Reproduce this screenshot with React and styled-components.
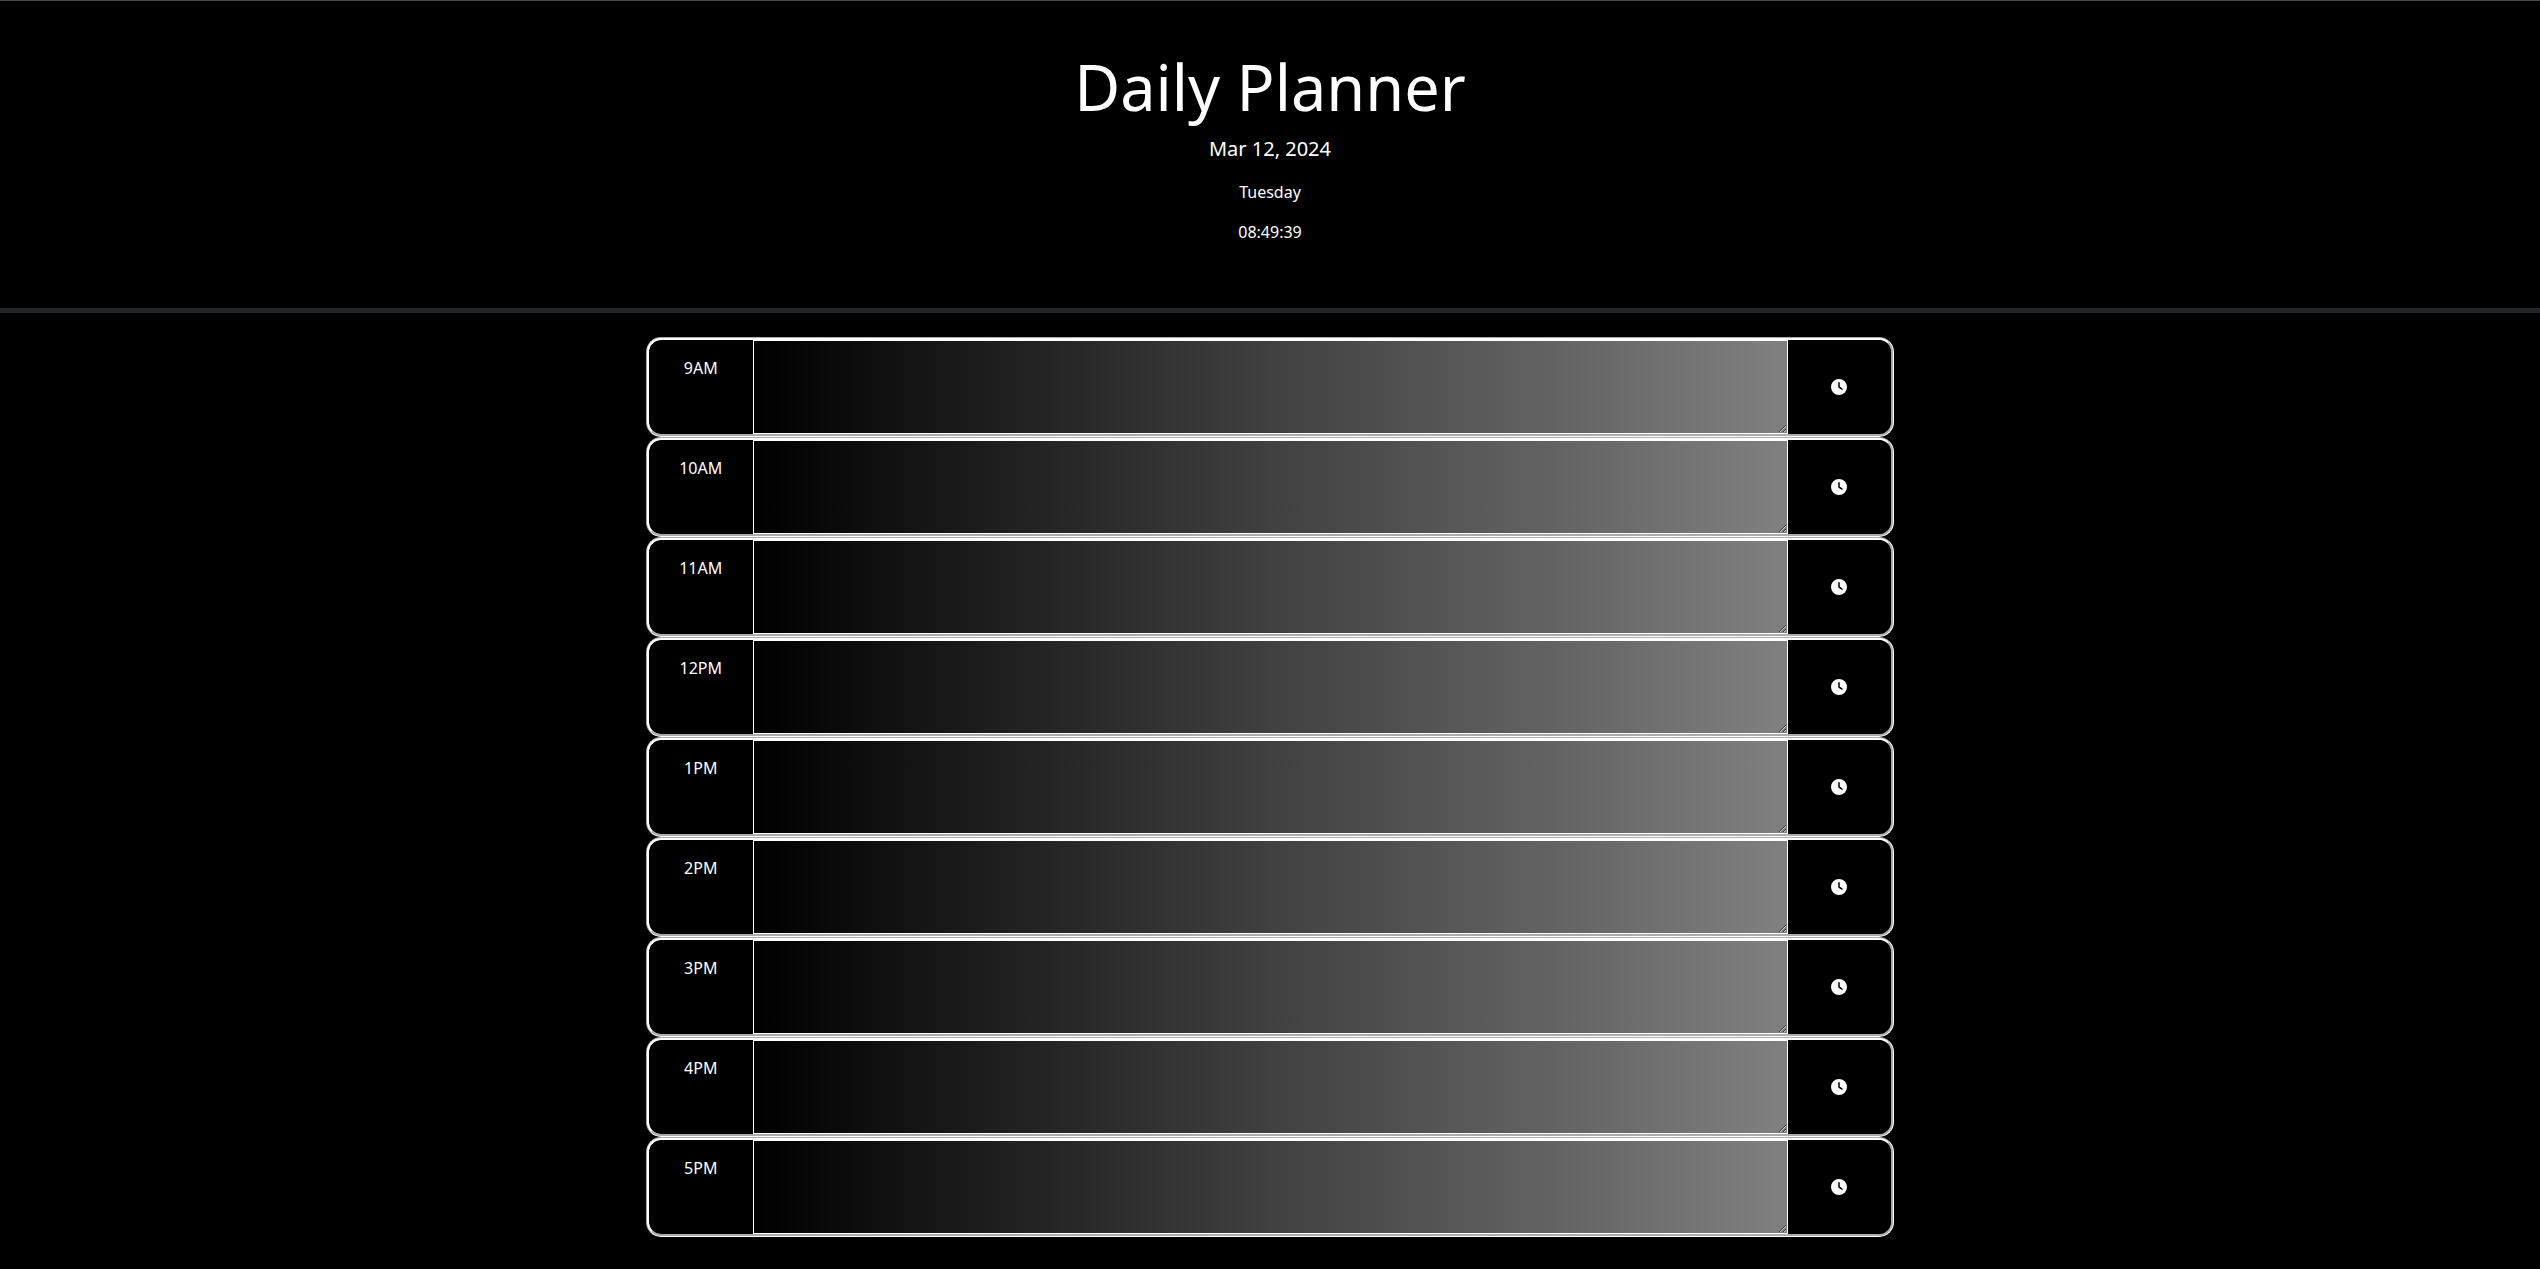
import React from "react";
import styled, { createGlobalStyle } from "styled-components";
import { FaClock } from "react-icons/fa6";

const GlobalStyle = createGlobalStyle`
  *, *::before, *::after { box-sizing: border-box; }
  body {
    margin: 0;
    background: #000;
    color: #fff;
    font-family: "Noto Sans", "Open Sans", sans-serif;
    font-size: 16px;
    line-height: 24px;
  }
`;

const Header = styled.header`
  margin-bottom: 24px;
  padding: 48px;
  border-top: 1px solid #4a4a4a;
  border-bottom: 5px solid #212529;
  text-align: center;
`;

const Title = styled.h1`
  margin: 0 0 8px;
  font-size: 63px;
  font-weight: 400;
  line-height: 76px;
`;

const Lead = styled.p`
  margin: 0 0 16px;
  font-size: 20px;
  line-height: 31px;
`;

const Info = styled.p`
  margin: 0 0 16px;
`;

const Planner = styled.main`
  width: 100%;
  max-width: 1248px;
  margin: 0 auto;
`;

const TimeBlock = styled.section`
  display: grid;
  grid-template-columns: 1fr 10fr 1fr;
  height: 100px;
  overflow: hidden;
  border: 3px groove #fff;
  border-radius: 15px;
`;

const Hour = styled.label`
  padding: 16px 0;
  text-align: center;
`;

const Description = styled.textarea`
  display: block;
  width: 100%;
  height: 100%;
  margin: 0;
  padding: 2px 12px;
  border: 1px solid #fff;
  border-radius: 0;
  outline: 0;
  background: linear-gradient(to right, #000, #808080);
  color: #fff;
  font: inherit;
`;

const SaveButton = styled.button`
  display: flex;
  align-items: center;
  justify-content: center;
  padding: 0;
  border: 0;
  background: #000;
  color: #fff;
  font-size: 16px;
  cursor: pointer;
`;

const hours = ["9AM", "10AM", "11AM", "12PM", "1PM", "2PM", "3PM", "4PM", "5PM"];

export default function App() {
  return (
    <>
      <GlobalStyle />
      <Header>
        <Title>Daily Planner</Title>
        <Lead>Mar 12, 2024</Lead>
        <Info>Tuesday</Info>
        <Info>08:49:39</Info>
      </Header>
      <Planner>
        {hours.map((hour) => (
          <TimeBlock key={hour}>
            <Hour htmlFor={`hour-${hour}`}>{hour}</Hour>
            <Description id={`hour-${hour}`} />
            <SaveButton type="button" aria-label={`Save ${hour}`}>
              <FaClock aria-hidden="true" />
            </SaveButton>
          </TimeBlock>
        ))}
      </Planner>
    </>
  );
}
